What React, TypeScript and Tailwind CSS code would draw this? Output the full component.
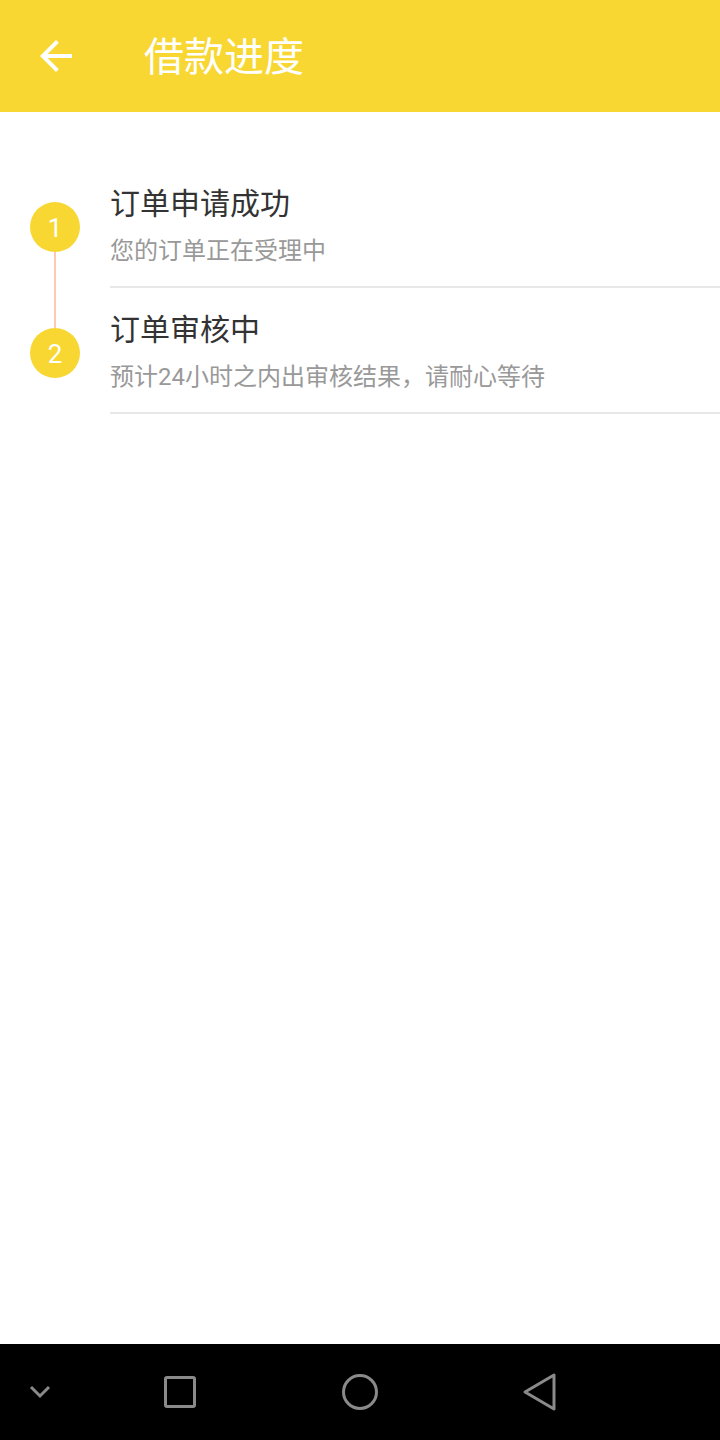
const font = "font-['Roboto','Noto_Sans_CJK_SC',sans-serif]";

const steps = [
    { no: 1, title: "订单申请成功", desc: "您的订单正在受理中" },
    { no: 2, title: "订单审核中", desc: "预计24小时之内出审核结果，请耐心等待" },
];

function StepRow({ no, title, desc, first, last }: { no: number; title: string; desc: string; first: boolean; last: boolean }) {
    return (
        <div className="flex flex-row">
            <div className="w-[110px] flex flex-col items-center">
                <div className={`w-[2px] h-[40px] ${first ? "" : "bg-[#fdc9b0]"}`} />
                <div className="w-[50px] h-[50px] rounded-full bg-[#f8d732] flex items-center justify-center text-white text-[26px] leading-none pt-[2px]">
                    {no}
                </div>
                <div className={`w-[2px] flex-1 ${last ? "" : "bg-[#fdc9b0]"}`} />
            </div>
            <div className="flex-1 flex flex-col pt-[24px] pb-[20px] border-b-2 border-[#e8e8e8]">
                <span className="text-[30px] leading-[36px] text-[#333333]">{title}</span>
                <span className="mt-[14px] text-[24px] leading-[30px] text-[#999999]">{desc}</span>
            </div>
        </div>
    );
}

export default function App() {
    return (
        <div className={`w-[720px] h-[1440px] flex flex-col bg-white ${font}`}>
            <div className="h-[112px] bg-[#f8d732] flex flex-row items-center shrink-0">
                <svg className="ml-[32px] w-[48px] h-[48px]" viewBox="0 0 24 24" fill="white">
                    <path d="M20 11H7.83l5.59-5.59L12 4l-8 8 8 8 1.41-1.41L7.83 13H20v-2z" />
                </svg>
                <h1 className="ml-[64px] mt-[4px] text-white text-[40px] leading-none">借款进度</h1>
            </div>
            <div className="flex-1 pt-[50px]">
                {steps.map((s, i) => (
                    <StepRow key={s.no} {...s} first={i === 0} last={i === steps.length - 1} />
                ))}
            </div>
            <div className="h-[96px] bg-black flex flex-row items-center shrink-0">
                <svg className="ml-[28px] w-[24px] h-[16px]" viewBox="0 0 24 16" fill="none" stroke="#8a8a8a" strokeWidth="3">
                    <path d="M3 3l9 9 9-9" />
                </svg>
                <div className="ml-[112px] w-[32px] h-[32px] border-[3px] border-[#8a8a8a] rounded-[3px]" />
                <div className="ml-[146px] w-[36px] h-[36px] border-[3px] border-[#8a8a8a] rounded-full" />
                <svg className="ml-[144px] w-[36px] h-[40px]" viewBox="0 0 36 40" fill="none" stroke="#8a8a8a" strokeWidth="3" strokeLinejoin="round">
                    <path d="M32 3L3 20l29 17z" />
                </svg>
            </div>
        </div>
    );
}
